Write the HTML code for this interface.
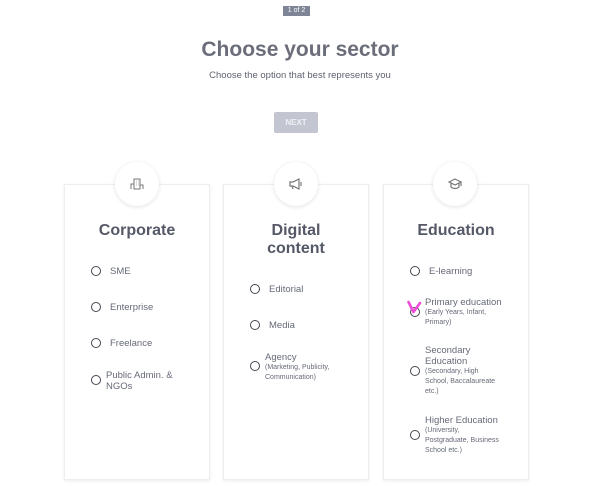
<!DOCTYPE html><html><head><style>
body{margin:0;width:600px;height:486px;background:#fff;font-family:"Liberation Sans",sans-serif;color:#5f6270;position:relative;overflow:hidden}
.a{position:absolute}
.card{position:absolute;top:184px;width:144px;height:294px;border:1px solid #eceef2;box-shadow:0 1px 3px rgba(0,0,0,.08);background:#fff}
.ic{position:absolute;top:162px;width:44px;height:44px;border-radius:50%;background:#fff;box-shadow:0 1px 4px rgba(0,0,0,.12);display:flex;align-items:center;justify-content:center}
.h{position:absolute;width:146px;text-align:center;font-weight:bold;font-size:16px;color:#555866;line-height:18px}
.r{position:absolute;width:8px;height:8px;border:1.6px solid #444752;border-radius:50%}
.t{position:absolute;font-size:9.5px;line-height:11px;color:#666a77}
.s{font-size:7px;line-height:10px;display:block}
</style></head><body>
<div class="a" style="left:283px;top:6px;width:27px;height:10px;background:#7f8596;color:#fff;font-size:7px;line-height:10px;text-align:center">1 of 2</div>
<div class="a" style="left:0;width:600px;top:38px;text-align:center;font-size:21px;font-weight:bold;color:#6b6e7a">Choose your sector</div>
<div class="a" style="left:0;width:600px;top:70px;text-align:center;font-size:9.5px;color:#5f6270">Choose the option that best represents you</div>
<div class="a" style="left:274px;top:112px;width:44px;height:21px;background:#c3c6d0;border-radius:2px;color:#eef0f4;font-size:8px;line-height:21px;text-align:center;font-weight:bold">NEXT</div>

<div class="card" style="left:64px"></div>
<div class="card" style="left:223px"></div>
<div class="card" style="left:383px"></div>
<div class="ic" style="left:115px"><svg width="14" height="12" viewBox="0 0 14 12" fill="none" stroke="#777" stroke-width="1"><rect x="4" y="1" width="6" height="10"/><path d="M1 11V6h3M10 7h3v4M6 3h0.5M8 3h.5M6 5h.5M8 5h.5M6 7h.5M8 7h.5"/></svg></div>
<div class="ic" style="left:274px"><svg width="14" height="12" viewBox="0 0 14 12" fill="none" stroke="#777" stroke-width="1.2"><path d="M1 4h3l6-3v10L4 8H1zM3 8l1 3M12 4v4"/></svg></div>
<div class="ic" style="left:433px"><svg width="14" height="12" viewBox="0 0 14 12" fill="none" stroke="#777" stroke-width="1.2"><path d="M1 4l6-3 6 3-6 3zM3 5v4c2 2 6 2 8 0V5M13 4v4"/></svg></div>

<div class="h" style="left:64px;top:222px">Corporate</div>
<div class="h" style="left:223px;top:222px">Digital<br>content</div>
<div class="h" style="left:383px;top:222px">Education</div>

<div class="r" style="left:91px;top:266px"></div><div class="t" style="left:110px;top:266px">SME</div>
<div class="r" style="left:91px;top:302px"></div><div class="t" style="left:110px;top:302px">Enterprise</div>
<div class="r" style="left:91px;top:338px"></div><div class="t" style="left:110px;top:338px">Freelance</div>
<div class="r" style="left:91px;top:375px"></div><div class="t" style="left:106px;top:370px">Public Admin. &amp;<br>NGOs</div>

<div class="r" style="left:250px;top:284px"></div><div class="t" style="left:269px;top:284px">Editorial</div>
<div class="r" style="left:250px;top:320px"></div><div class="t" style="left:269px;top:320px">Media</div>
<div class="r" style="left:250px;top:361px"></div><div class="t" style="left:265px;top:352px">Agency<span class="s">(Marketing, Publicity,<br>Communication)</span></div>

<div class="r" style="left:410px;top:266px"></div><div class="t" style="left:429px;top:266px">E-learning</div>
<div class="r" style="left:410px;top:307px"></div><div class="t" style="left:425px;top:297px">Primary education<span class="s">(Early Years, Infant,<br>Primary)</span></div>
<svg class="a" style="left:407px;top:300px" width="16" height="16" viewBox="0 0 16 16"><path d="M1.5 2l5 10L13 3" fill="none" stroke="#f04ad8" stroke-width="2.6" stroke-linecap="round" stroke-linejoin="round"/></svg>
<div class="r" style="left:410px;top:366px"></div><div class="t" style="left:425px;top:345px">Secondary<br>Education<span class="s">(Secondary, High<br>School, Baccalaureate<br>etc.)</span></div>
<div class="r" style="left:410px;top:430px"></div><div class="t" style="left:425px;top:415px">Higher Education<span class="s">(University,<br>Postgraduate, Business<br>School etc.)</span></div>
</body></html>
